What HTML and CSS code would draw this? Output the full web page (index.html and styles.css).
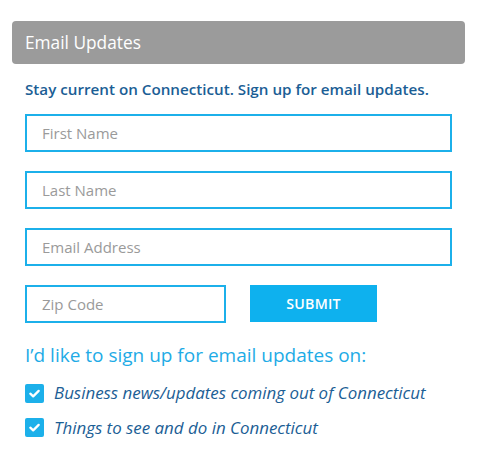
FILE: index.html
```html
<!DOCTYPE html>
<html lang="en">
<head>
<meta charset="utf-8">
<title>Email Updates</title>
<link rel="stylesheet" href="styles.css">
</head>
<body>
<div class="widget">
  <div class="header">Email Updates</div>
  <div class="content">
    <p class="lead">Stay current on Connecticut. Sign up for email updates.</p>
    <div class="field">First Name</div>
    <div class="field">Last Name</div>
    <div class="field">Email Address</div>
    <div class="row">
      <div class="field zip">Zip Code</div>
      <div class="submit">SUBMIT</div>
    </div>
    <p class="title">I’d like to sign up for email updates on:</p>
    <ul class="options">
      <li class="option"><span class="check"><svg viewBox="0 0 20 20" width="20" height="20"><path d="M5.6 10.2 L8.6 13 L14.4 7.2" fill="none" stroke="#fff" stroke-width="2.4" stroke-linecap="round" stroke-linejoin="round"/></svg></span><span class="label">Business news/updates coming out of Connecticut</span></li>
      <li class="option"><span class="check"><svg viewBox="0 0 20 20" width="20" height="20"><path d="M5.6 10.2 L8.6 13 L14.4 7.2" fill="none" stroke="#fff" stroke-width="2.4" stroke-linecap="round" stroke-linejoin="round"/></svg></span><span class="label">Things to see and do in Connecticut</span></li>
    </ul>
  </div>
</div>
</body>
</html>
```
FILE: styles.css
```css
* { box-sizing: border-box; }
html, body { margin: 0; padding: 0; background: #fff; }
body { font-family: "Open Sans", "Liberation Sans", sans-serif; }
.widget { padding: 21px 13px 0 12px; }
.header {
  height: 43px;
  background: #9b9b9b;
  border-radius: 4px;
  color: #fff;
  font-size: 17.3px;
  line-height: 43px;
  padding-left: 13px;
}
.content { padding: 0 13px 0 13px; }
.lead {
  margin: 15px 0 0;
  font-size: 15.2px;
  font-weight: 600;
  line-height: 20px;
  color: #1b5e95;
}
.field {
  margin-top: 19px;
  height: 38px;
  border: 2px solid #1cb0ea;
  color: #9a9a9a;
  font-size: 15px;
  line-height: 34px;
  padding-left: 15px;
}
.lead + .field { margin-top: 15px; }
.row { display: flex; align-items: flex-start; gap: 24px; margin-top: 19px; }
.row .field { margin-top: 0; }
.zip { width: 201px; }
.submit {
  width: 127px;
  height: 37px;
  background: #0eb1ee;
  color: #fff;
  font-size: 14.2px;
  font-weight: 600;
  line-height: 37px;
  text-align: center;
  letter-spacing: 0.2px;
}
.title {
  margin: 20px 0 0;
  font-size: 19px;
  line-height: 24px;
  color: #1eabe6;
}
.options { list-style: none; margin: 16px 0 0; padding: 0; display: flex; flex-direction: column; gap: 14.5px; }
.option { display: flex; align-items: center; gap: 10px; height: 20px; }
.check {
  width: 19px;
  height: 19px;
  background: #1cb0ea;
  border-radius: 2px;
  display: flex;
  align-items: center;
  justify-content: center;
}
.check svg { width: 19px; height: 19px; }
.label {
  font-style: italic;
  font-size: 16.9px;
  color: #1b5e95;
  line-height: 20px;
}
```
